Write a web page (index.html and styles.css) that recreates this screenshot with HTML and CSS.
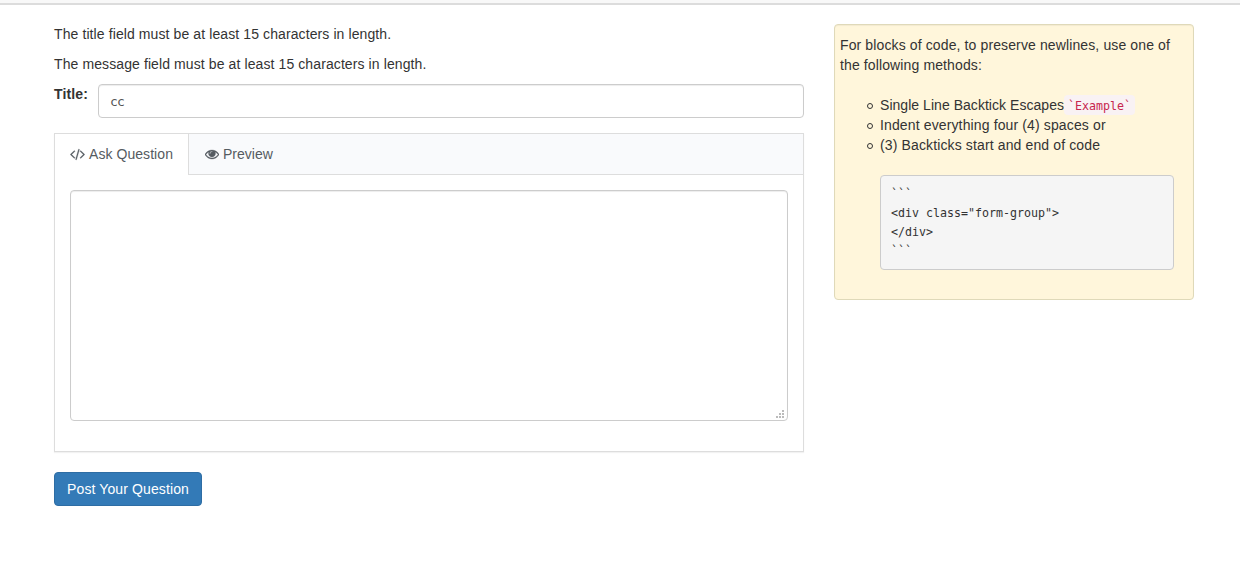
FILE: index.html
```html
<!DOCTYPE html>
<html lang="en">

<head>
  <meta charset="UTF-8">
  <meta name="viewport" content="width=device-width, initial-scale=1.0">
  <title>Ask Question</title>
  <link rel="stylesheet" href="styles.css">
</head>

<body>
  <div class="navbar"></div>

  <div class="container">
    <form class="main">
      <p>The title field must be at least 15 characters in length.</p>
      <p>The message field must be at least 15 characters in length.</p>

      <div class="title-group">
        <label for="title">Title:</label>
        <input type="text" id="title" class="form-control" value="cc">
      </div>

      <div class="panel">
        <div class="tabs">
          <a class="tab active">
            <svg class="icon-code" viewBox="0 0 1920 1792"><path d="M617 1399l-50 50q-10 10-23 10t-23-10l-466-466q-10-10-10-23t10-23l466-466q10-10 23-10t23 10l50 50q10 10 10 23t-10 23l-393 393 393 393q10 10 10 23t-10 23zm591-1067l-373 1291q-4 13-15.5 19.5t-23.5 2.5l-62-17q-13-4-19.5-15.5t-2.5-24.5l373-1291q4-13 15.5-19.5t23.5-2.5l62 17q13 4 19.5 15.5t2.5 24.5zm657 651l-466 466q-10 10-23 10t-23-10l-50-50q-10-10-10-23t10-23l393-393-393-393q-10-10-10-23t10-23l50-50q10-10 23-10t23 10l466 466q10 10 10 23t-10 23z"/></svg>
            <span>Ask Question</span>
          </a>
          <a class="tab">
            <svg class="icon-eye" viewBox="0 0 1792 1792"><path d="M1664 960q-152-236-381-353 61 104 61 225 0 185-131.5 316.5t-316.5 131.5-316.5-131.5-131.5-316.5q0-121 61-225-229 117-381 353 133 205 333.5 326.5t434.5 121.5 434.5-121.5 333.5-326.5zm-720-384q0-20-14-34t-34-14q-125 0-214.5 89.5t-89.5 214.5q0 20 14 34t34 14 34-14 14-34q0-86 61-147t147-61q20 0 34-14t14-34zm848 384q0 34-20 69-140 230-376.5 368.5t-499.5 138.5-499.5-139-376.5-368q-20-35-20-69t20-69q140-229 376.5-368t499.5-139 499.5 139 376.5 368q20 35 20 69z"/></svg>
            <span>Preview</span>
          </a>
        </div>
        <div class="panel-body">
          <textarea class="form-control message"></textarea>
          <svg class="grip" viewBox="0 0 8 8"><path d="M6 0h2v2h-2zM3 3h2v2h-2zM6 3h2v2h-2zM0 6h2v2h-2zM3 6h2v2h-2zM6 6h2v2h-2z"/></svg>
        </div>
      </div>

      <button type="button" class="btn">Post Your Question</button>
    </form>

    <div class="help">
      <p>For blocks of code, to preserve newlines, use one of the following methods:</p>
      <ul>
        <li class="inline-code">Single Line Backtick Escapes <code>`Example`</code></li>
        <li>Indent everything four (4) spaces or</li>
        <li>(3) Backticks start and end of code</li>
      </ul>
      <pre>```
&lt;div class="form-group"&gt;
&lt;/div&gt;
```</pre>
    </div>
  </div>
</body>

</html>
```

FILE: styles.css
```css
*,
*::before {
  box-sizing: border-box;
}

body {
  margin: 0;
  background: #fff;
  color: #333;
  font-family: "Liberation Sans", Arial, sans-serif;
  font-size: 14px;
  line-height: 20px;
}

p {
  margin: 0 0 10px;
  letter-spacing: 0.1px;
}

.navbar {
  height: 5px;
  background: #f8f8f8;
  border-bottom: 2px solid #dcdcdc;
}

.container {
  display: flex;
  align-items: flex-start;
  gap: 30px;
  padding: 19px 46px 0 54px;
}

.main {
  width: 750px;
}

.title-group {
  display: flex;
  gap: 10px;
  margin-bottom: 15px;
}

label {
  width: 34px;
  font-weight: bold;
  letter-spacing: 0.15px;
}

.form-control {
  border: 1px solid #ccc;
  border-radius: 4px;
  box-shadow: inset 0 1px 1px rgba(0, 0, 0, 0.075);
  background: #fff;
  color: #555;
  font-family: "DejaVu Sans Mono", monospace;
  font-size: 13px;
  letter-spacing: -0.9px;
}

input.form-control {
  flex: 1;
  min-width: 0;
  height: 34px;
  padding: 7px 12px 6px 11px;
}

.panel {
  border: 1px solid #ddd;
  box-shadow: 0 1px 1px rgba(0, 0, 0, 0.05);
  height: 319px;
  margin-bottom: 20px;
}

.tabs {
  display: flex;
  height: 41px;
  background: #f9fafc;
  border-bottom: 1px solid #ddd;
}

.tab {
  display: flex;
  gap: 4px;
  padding: 10px 15px;
  height: 41px;
  color: #555b61;
}

.tab.active {
  width: 134px;
  background: #fff;
  border-right: 1px solid #ddd;
  letter-spacing: 0.06px;
}

.tab svg {
  flex: none;
  height: 14px;
  margin-top: 3px;
  fill: currentColor;
  stroke: currentColor;
  stroke-width: 40;
}

.icon-code {
  width: 15px;
}

.icon-eye {
  width: 14px;
  margin-left: 1px;
}

.panel-body {
  position: relative;
  padding: 15px;
}

.message {
  display: block;
  width: 100%;
  height: 231px;
  padding: 6px 12px;
  resize: none;
}

/* resize handle over the textarea corner */
.grip {
  position: absolute;
  right: 19px;
  bottom: 18px;
  width: 8px;
  height: 8px;
  fill: #bbb;
}

.btn {
  display: block;
  width: 148px;
  height: 34px;
  padding: 6px 12px;
  border: 1px solid #2e6da4;
  border-radius: 4px;
  background: #337ab7;
  color: #fff;
  font-family: inherit;
  font-size: 14px;
  line-height: 20px;
  letter-spacing: 0.11px;
  white-space: nowrap;
}

.help {
  width: 360px;
  height: 276px;
  padding: 10px 19px 0 5px;
  border: 1px solid #dfd9b9;
  border-radius: 4px;
  background: #fff6db;
  box-shadow: inset 0 1px 1px rgba(0, 0, 0, 0.05);
}

.help p {
  margin-bottom: 20px;
  letter-spacing: 0.12px;
}

ul {
  margin: 0 0 20px;
  padding-left: 27px;
  list-style: none;
}

li {
  display: flex;
  align-items: center;
  height: 20px;
  letter-spacing: 0.13px;
  white-space: pre;
}

li::before {
  content: "";
  width: 6px;
  height: 6px;
  margin: 1px 7px 0 0;
  border: 1px solid #333;
  border-radius: 50%;
}

.inline-code {
  letter-spacing: 0.04px;
}

code {
  margin-left: -4px;
  padding: 2px 4px 0;
  border-radius: 4px;
  background: #f9f2f4;
  color: #c7254e;
  font-family: "DejaVu Sans Mono", monospace;
  font-size: 11.63px;
  line-height: 18px;
  letter-spacing: 0;
}

pre {
  height: 95px;
  margin: 0 0 0 40px;
  padding: 9px 10px;
  border: 1px solid #ccc;
  border-radius: 4px;
  background: #f5f5f5;
  font-family: "DejaVu Sans Mono", monospace;
  font-size: 11.63px;
  line-height: 19px;
}
```
